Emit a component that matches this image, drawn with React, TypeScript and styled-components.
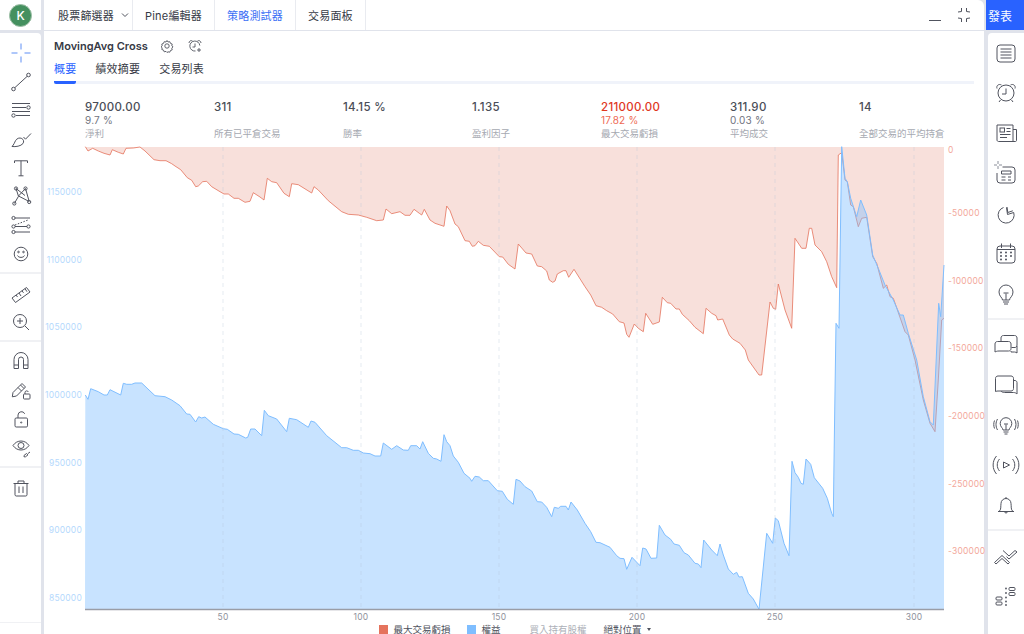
import { ReactNode } from 'react';
import styled, { createGlobalStyle } from 'styled-components';

const GlobalStyle = createGlobalStyle`
  html, body {
    margin: 0;
    height: 100%;
    overflow: hidden;
    background: #e0e3eb;
    font-family: Inter, "Noto Sans CJK TC", "Liberation Sans", sans-serif;
    color: #363a45;
  }
`;

const GlyphSvg = styled.svg`
  display: block;
  fill: none;
  stroke: #50535e;
  stroke-width: 1;
`;

const CrossGlyph = styled(GlyphSvg)`
  stroke: #5f8ff5;
`;

// curves were read off enlarged crops, so each run keeps its crop origin and scale
const crop = (ox: number, oy: number, s: number, raw: number[]) => {
  const pts: [number, number][] = [];
  for (let i = 0; i < raw.length; i += 2) pts.push([ox + raw[i] / s, oy + raw[i + 1] / s]);
  return pts;
};

const drawdown = [
  ...crop(80, 145, 3, [16,5,24,18,38,10,55,18,72,25,90,30,97,14,115,22,130,27,138,10,160,9,180,6,195,18,222,44,240,47,258,47,275,56,285,63,302,74,322,98,335,106,347,125,355,123,368,110,380,109,395,125,420,140,432,147,445,147,462,160,475,160,495,172,510,169,520,143,540,156,552,165,562,100,575,110,590,113,612,145,628,155,635,116,655,119,695,144,702,125,715,135,745,167,785,200,805,208,835,210,860,217,890,227,910,225,918,192,935,206,960,200,975,211,990,211,1002,193,1018,205]),
  ...crop(420, 200, 3, [5,45,13,28,30,60,45,70,72,79,80,18,90,32,105,72,115,80,135,122,148,124,157,139,165,137,175,124,190,136,208,139,238,170,248,171,265,193,285,207,295,132,318,159,335,162,352,198,365,200,380,213,388,240,398,247,405,243,412,222,430,212,438,212,446,232,462,208,495,260,512,285,528,317,545,322,560,332,578,342,598,365,612,369,620,403,627,412,643,372,655,385,670,395,677,340,698,373,718,366,727,292,742,308,752,310,768,327,778,327,787,343,808,362,825,382,850,401,858,325,875,340,888,347,893,360,908,357,928,405,938,417,960,430,976,450,985,480,1017,525,1025,525,1050,306,1060,325,1067,328]),
  ...crop(720, 140, 3, [175,432,195,510,215,565,225,295,245,325,258,325,268,265,275,265,285,315,305,335,320,365,335,410,350,443,355,45,365,38,375,120,382,125,392,195,400,200,415,260,425,235,440,232,458,350,470,370,490,445,500,435,510,470,520,475,555,575,565,585,585,660,610,780,630,850,645,875,655,720,665,540,672,535]),
];

const equity = [
  ...crop(80, 375, 3, [16,60,24,73,32,41,55,50,72,60,82,60,90,44,122,60,130,25,140,28,155,28,165,24,185,24,225,62,255,65,275,75,300,92,320,117,330,118,347,141,356,125,365,129,375,126,400,148,430,161,442,163,462,177,475,178,497,189,503,187,512,162,525,162,545,182,553,106,565,122,590,132,620,170,628,130,650,134,685,157,693,138,705,142,740,182,785,218,800,218,820,226,835,226,850,234,870,236,885,243,902,243,910,204,935,223,950,212,970,225,985,226,992,212,1010,212,1020,222]),
  ...crop(420, 430, 3, [8,35,25,70,40,85,50,87,63,94,72,14,80,35,90,47,100,78,115,97,132,130,150,145,155,154,165,139,178,141,190,152,205,152,232,182,247,184,262,208,280,223,288,148,300,153,315,170,335,183,352,215,365,216,380,232,395,260,403,232,415,235,422,229,438,229,445,240,453,216,472,240,495,280,512,305,528,337,540,338,570,352,590,377,600,385,612,386,620,418,636,382,660,407,668,354,678,357,693,385,710,384,718,286,735,315,752,328,762,342,778,346,792,368,805,375,825,400,835,402,843,413,851,330,875,360,892,377,900,342,910,375,925,417,940,433,950,427,957,441,967,440,985,490,1000,507,1017,538,1040,310,1058,340,1066,264,1075,272,1092,340,1107,377,1116,94,1125,128,1135,142,1143,160,1150,163,1158,87,1172,103,1183,143,1208,175,1222,205,1235,250,1240,260]),
  ...crop(720, 140, 3, [343,900,348,550,357,565,365,20,375,115,382,125,392,175,410,230,422,180,440,225,458,345,475,385,495,435,520,480,540,525,550,525,565,580,590,660,610,770,630,845,640,855,656,490,662,530,672,375]),
];

const line = (pts: [number, number][]) => pts.map(([x, y]) => `${x.toFixed(1)},${y.toFixed(1)}`).join(' ');

const PLOT = { left: 85, right: 944, top: 147, bottom: 609 };

const drawdownArea = `${PLOT.left},${PLOT.top} ${line(drawdown)} ${PLOT.right},${PLOT.top}`;
const equityArea = `${PLOT.left},${PLOT.bottom} ${line(equity)} ${PLOT.right},${PLOT.bottom}`;

const ticks = [
  { x: 223, label: '50' },
  { x: 361, label: '100' },
  { x: 499, label: '150' },
  { x: 637, label: '200' },
  { x: 775, label: '250' },
  { x: 914, label: '300' },
];
const leftAxis = [
  { y: 192, label: '1150000' },
  { y: 260, label: '1100000' },
  { y: 327, label: '1050000' },
  { y: 395, label: '1000000' },
  { y: 463, label: '950000' },
  { y: 530, label: '900000' },
  { y: 598, label: '850000' },
];
const rightAxis = [
  { y: 150, label: '0' },
  { y: 213, label: '-50000' },
  { y: 281, label: '-100000' },
  { y: 348, label: '-150000' },
  { y: 416, label: '-200000' },
  { y: 484, label: '-250000' },
  { y: 551, label: '-300000' },
];

const stats = [
  { value: '97000.00', sub: '9.7 %', label: '淨利' },
  { value: '311', label: '所有已平倉交易' },
  { value: '14.15 %', label: '勝率' },
  { value: '1.135', label: '盈利因子' },
  { value: '211000.00', sub: '17.82 %', label: '最大交易虧損', loss: true },
  { value: '311.90', sub: '0.03 %', label: '平均成交' },
  { value: '14', label: '全部交易的平均持倉' },
];

const Glyph = ({ children }: { children: ReactNode }) => (
  <GlyphSvg width={28} height={28} viewBox="0 0 28 28">
    {children}
  </GlyphSvg>
);

const leftGroups: ReactNode[][] = [
  [
    <CrossGlyph key="cross" viewBox="0 0 28 28" width={28} height={28}>
      <path d="M4.5 14h6M17.5 14h6M14 4.5v6M14 17.5v6" />
    </CrossGlyph>,
    <Glyph key="line">
      <path d="M7.8 19.7 20.2 8.300" />
      <circle cx="6.5" cy="21" r="1.8" />
      <circle cx="21.5" cy="7" r="1.8" />
    </Glyph>,
    <Glyph key="channel">
      <path d="M5 7.5h18M5 11.5h14M5 15.5h18M9 19.5h14" />
      <circle cx="21.5" cy="11.5" r="1.7" />
      <circle cx="6.5" cy="19.5" r="1.7" />
    </Glyph>,
    <Glyph key="brush">
      <path d="M5 21.5c3.500.5 9-.3 11-3 1.200-1.800.6-4-1.200-5-2.200-1.200-5-.2-6.300 2.200-1 1.800-1.500 3.800-3.500 5.800Z" />
      <path d="m16.5 12 2 2.200 5.500-5.700" />
    </Glyph>,
    <Glyph key="text">
      <path d="M7.5 9V6.800h13V9M14 6.800v15M11.5 21.800h5" />
    </Glyph>,
    <Glyph key="pattern">
      <path d="m9 6.500 2.500 7.800-4.200 7.200M9 6.500l9 7M18.5 6.500l-7 7.500M18.5 6.500l3.700 13M11.5 14l10.700 5.500" />
      <circle cx="9" cy="6.5" r="1.6" />
      <circle cx="18.5" cy="6.5" r="1.6" />
      <circle cx="7.3" cy="21.5" r="1.6" />
      <circle cx="22.2" cy="20" r="1.6" />
    </Glyph>,
    <Glyph key="forecast">
      <path d="M8 7h15M8 15.5h12M8 21h15" />
      <path strokeDasharray="1.5 1.5" d="m8 14 13-5" />
      <circle cx="6.5" cy="7" r="1.6" />
      <circle cx="6.5" cy="15.5" r="1.6" />
      <circle cx="6.5" cy="21" r="1.6" />
      <circle cx="21.5" cy="15.5" r="1.6" />
    </Glyph>,
    <Glyph key="smile">
      <circle cx="14" cy="14" r="6.8" />
      <path d="M10.5 15.5c1 2.500 6 2.500 7 0" />
      <circle cx="11.5" cy="12" r=".8" />
      <circle cx="16.5" cy="12" r=".8" />
    </Glyph>,
  ],
  [
    <Glyph key="ruler">
      <path d="m5 19 14.500-10.500 3.500 4.500L8.500 23.500Z" />
      <path d="m9 16 1.500 2M12 14l2 3M15 11.800l1.500 2M18 9.700l2 3" />
    </Glyph>,
    <Glyph key="zoom">
      <circle cx="13" cy="13" r="6.5" />
      <path d="m18 18 4 4M13 10v6M10 13h6" />
    </Glyph>,
  ],
  [
    <Glyph key="magnet">
      <path d="M7 21.500v-9a7 7 0 0 1 14 0v9h-4.500v-9a2.500 2.500 0 0 0-5 0v9ZM7 18h4.500M16.500 18H21" />
    </Glyph>,
    <Glyph key="pencil-lock">
      <path d="m6 16.500 9-9 3.500 3.500-9 9-4.200.8ZM13.500 9l3.500 3.500M11 11.500l3.500 3.500" />
      <rect x="16.5" y="18" width="6.5" height="5" rx=".8" />
      <path d="M18 18v-1.500a1.700 1.700 0 0 1 3.300-.5" />
    </Glyph>,
    <Glyph key="lock">
      <rect x="8" y="13" width="12.5" height="9" rx="1.2" />
      <path d="M11 13v-3a3.500 3.500 0 0 1 6.700-1.200" />
      <circle cx="14.2" cy="17.5" r=".6" />
    </Glyph>,
    <Glyph key="eye">
      <path d="M6 11.500c4-6 12-6 16 0-4 6-12 6-16 0Z" />
      <circle cx="14" cy="11.5" r="3" />
      <path d="m17 21.500 2.500-2 1.500 1.300-2.500 2h-1.500ZM21 19.500l2-1.500" />
    </Glyph>,
  ],
  [
    <Glyph key="trash">
      <path d="M8 9.500v11.300c0 .7.500 1.200 1.200 1.200h9.600c.7 0 1.200-.5 1.200-1.200V9.500M6.500 9.500h15M11 9.500V7h6v2.500M12 12.500v6.500M16 12.500v6.500" />
    </Glyph>,
  ],
];

const rightGroups: ReactNode[][] = [
  [
    <Glyph key="list">
      <rect x="5" y="5" width="18" height="17" rx="3" />
      <path d="M8.5 9h11M8.5 12h11M8.5 15h11M8.5 18h11" />
    </Glyph>,
    <Glyph key="alarm">
      <circle cx="14" cy="13" r="8" />
      <path d="M14 8.500V14h-4M5 8.500c-1-3 2-5 4.500-3.500M23 8.500c1-3-2-5-4.500-3.500M8.500 20 7 22M19.500 20l1.500 2" />
    </Glyph>,
    <Glyph key="news">
      <path d="M21 21.500H6.500c-.8 0-1.500-.7-1.500-1.500V5h16v16.500h2.500c.5 0 1-.5 1-1V9.500H21" />
      <rect x="8" y="8" width="4.5" height="4" />
      <path d="M14.5 8.500h4M14.500 11.500h4M8 14.500h10.500M8 17.500h7" />
    </Glyph>,
    <Glyph key="screen">
      <path d="M2 5h3M7 5h3M6 1v3M6 6v3" stroke="#8a8e99" />
      <path d="M10.5 7H20a3 3 0 0 1 3 3v10a3 3 0 0 1-3 3H8a3 3 0 0 1-3-3v-7" />
      <path d="M9.5 11h9.500v3H9.500ZM9.500 17h4M9.500 20h4M16 17h3M16 20h3" />
    </Glyph>,
    <Glyph key="pie">
      <path d="M11.5 7.500a8 8 0 1 0 10.200 5l-6.200 2-1-7" />
      <path d="m15 7 .8 5.500 5-1.700" />
    </Glyph>,
    <Glyph key="calendar">
      <rect x="5" y="6" width="18" height="17" rx="3" />
      <path d="M9.5 3.500V8M18.500 3.500V8M5 9.500h18" />
      <path strokeWidth="2" strokeLinecap="round" d="M9 12.500h0M14 12.500h0M19 12.500h0M9 16h0M14 16h0M19 16h0M9 19.500h0M14 19.500h0" />
    </Glyph>,
    <Glyph key="bulb">
      <path d="M10.5 20c0-2.500-3.500-3.500-3.500-8a7 7 0 0 1 14 0c0 4.500-3.500 5.500-3.500 8ZM11 22h6M12 24h4" />
      <path d="M14 20v-6.500M11.500 13h5" />
    </Glyph>,
  ],
  [
    <Glyph key="chats">
      <path d="M3 21V13c0-1.500 1-2.500 2.500-2.500h11c1.500 0 2.500 1 2.500 2.500v4.500c0 1.500-1 2.500-2.500 2.500H7c-2 0-3 .5-4 1Z" />
      <path d="M9 10.500V7c0-1.500 1-2.500 2.500-2.500h11C24 4.500 25 5.500 25 7v7c0 1.500-1 2.500-2 2.500h-3.500" />
      <path d="M19 20v1h3.500c1 0 2 .5 2.500 1v-7" />
    </Glyph>,
    <Glyph key="chat">
      <path d="M3.5 20.500V7.500C3.500 6 4.500 5 6 5h13c1.500 0 2.500 1 2.500 2.500v10c0 1.500-1 2.500-2.500 2.500H7c-1.500 0-2.800 0-3.500.5Z" />
      <path d="M21.5 9.500h1.500c1 0 2 1 2 2v11.500c-1-1-2-1.500-3.500-1.500H12.500c-1.500 0-3-.5-3.500-1.500" />
    </Glyph>,
    <Glyph key="bulb-waves">
      <path d="M11 19c0-2-2.800-3-2.800-6.500a5.800 5.800 0 0 1 11.600 0C19.800 16 17 17 17 19ZM11.500 21h5M12.500 23h3M14 19v-5.500M12 13h4" />
      <path d="M5.5 8c-2 3.500-2 7.500 0 11M2.500 9.500c-1 2.500-1 5.500 0 8M22.500 8c2 3.500 2 7.500 0 11M25.500 9.500c1 2.500 1 5.500 0 8" />
    </Glyph>,
    <Glyph key="play-waves">
      <path d="m11.5 11 6 3-6 3Z" />
      <path d="M7.5 8c-3 3.500-3 8.500 0 12M20.500 8c3 3.500 3 8.500 0 12M4.500 5c-4.500 5-4.500 13 0 18M23.500 5c4.500 5 4.500 13 0 18" />
    </Glyph>,
    <Glyph key="bell">
      <path d="M6 20.500h16M7 20.500c2.500-2 1.500-5 2-8a5 5 0 0 1 10 0c.5 3-.5 6 2 8M12.500 20.500c0 2 3 2 3 0M14 7.500V6" />
    </Glyph>,
  ],
  [
    <Glyph key="chevrons">
      <path d="m2.500 20.500 7.500-7 7.500 7-1.500 1.500-6-5.500-6 5.500ZM11 8.500l6 5.500 6-5.500 2 1.500-8 7-2.500-2.300" />
    </Glyph>,
    <Glyph key="pills">
      <rect x="17" y="5.5" width="6" height="3" rx="1" />
      <rect x="17" y="10.5" width="6" height="3" rx="1" />
      <rect x="4" y="15" width="6" height="3" rx="1" />
      <rect x="4" y="20" width="6" height="3" rx="1" />
      <path strokeWidth="1.8" strokeLinecap="round" d="M14 6.500h0M14 11h0M14 15.500h0M14 19.500h0M14 23h0" />
    </Glyph>,
  ],
];

const App = () => {
  return (
    <Shell>
      <GlobalStyle />

      <LeftColumn>
        <AvatarCell>
          <Avatar>K</Avatar>
        </AvatarCell>
        <LeftBar>
          {leftGroups.map((group, i) => (
            <LeftGroup key={i}>
              {group.map((icon, j) => (
                <LeftSlot key={j}>{icon}</LeftSlot>
              ))}
            </LeftGroup>
          ))}
          <LeftFooter />
        </LeftBar>
      </LeftColumn>

      <Center>
        <TopBar>
          <TopTab>
            股票篩選器
            <svg width="8" height="6" viewBox="0 0 8 6" fill="none" stroke="#50535e">
              <path d="m1 1.500 3 3 3-3" />
            </svg>
          </TopTab>
          <TopTab>Pine編輯器</TopTab>
          <TopTab $active>策略測試器</TopTab>
          <TopTab>交易面板</TopTab>
          <WindowButtons>
            <svg width="14" height="14" viewBox="0 0 14 14" stroke="#50535e" fill="none">
              <path d="M1 12.500h12" />
            </svg>
            <svg width="16" height="16" viewBox="0 0 16 16" stroke="#50535e" fill="none">
              <path d="M5.5 1v3.500L2 5M10.500 1v3.500L14 5M5.500 15v-3.500L2 11M10.500 15v-3.500L14 11" />
            </svg>
          </WindowButtons>
        </TopBar>

        <Panel>
          <TitleRow>
            <Title>MovingAvg Cross</Title>
            <TitleIcon viewBox="0 0 14 14" width={14} height={14}>
              <circle cx="7" cy="7" r="2.2" />
              <path d="M7 1.500 8 3l1.800-.3.700 1.700L12.200 5l-.4 1.800L13 7.800l-1.200 1.400.4 1.700-1.700.6-.7 1.700-1.800-.4L7 13.500l-1-1.100-1.800.4-.7-1.700-1.700-.6.400-1.700L1 7.800l1.200-1L1.800 5l1.700-.6.700-1.700L6 3Z" />
            </TitleIcon>
            <TitleIcon viewBox="0 0 14 14" width={14} height={14}>
              <path d="M11.800 6.500A5 5 0 1 0 7.500 12M7 4.500V8H4.500M1 4c0-2 2-3 3.500-2M13 4c0-2-2-3-3.500-2M11 9v4M9 11h4" />
            </TitleIcon>
          </TitleRow>

          <TabRow>
            <Tab $active>概要</Tab>
            <Tab>績效摘要</Tab>
            <Tab>交易列表</Tab>
          </TabRow>

          <StatsRow>
            {stats.map((stat) => (
              <Stat key={stat.label}>
                <StatValue $loss={stat.loss}>{stat.value}</StatValue>
                <StatSub $loss={stat.loss}>{stat.sub}</StatSub>
                <StatLabel>{stat.label}</StatLabel>
              </Stat>
            ))}
          </StatsRow>

          <Chart viewBox="44 147 940 475" width={940} height={475}>
            <polygon points={drawdownArea} fill="#f6d5cf" fillOpacity={0.75} />
            <polyline points={line(drawdown)} fill="none" stroke="#e5735d" strokeOpacity={0.8} />
            <polygon points={equityArea} fill="#7fbeff" fillOpacity={0.43} />
            <polyline points={line(equity)} fill="none" stroke="#7fbeff" />
            {ticks.map((t) => (
              <line key={t.x} x1={t.x} x2={t.x} y1={PLOT.top} y2={PLOT.bottom} stroke="#b4c4d8" strokeOpacity={0.35} strokeDasharray="4 4" />
            ))}
            <line x1={PLOT.left} x2={PLOT.right} y1={PLOT.bottom + 0.5} y2={PLOT.bottom + 0.5} stroke="#9a9da6" strokeWidth={1.5} />

            {leftAxis.map((a) => (
              <AxisText key={a.label} x={82} y={a.y + 3} textAnchor="end" fill="#b5d9fd">
                {a.label}
              </AxisText>
            ))}
            {rightAxis.map((a) => (
              <AxisText key={a.label} x={948} y={a.y + 3} fill="#f3a89b">
                {a.label}
              </AxisText>
            ))}
            {ticks.map((t) => (
              <AxisText key={t.x} x={t.x} y={620} textAnchor="middle" fill="#8f929c">
                {t.label}
              </AxisText>
            ))}
          </Chart>

          <Legend>
            <LegendItem>
              <Swatch $color="#e5735d" />
              最大交易虧損
            </LegendItem>
            <LegendItem>
              <Swatch $color="#7fbeff" />
              權益
            </LegendItem>
            <LegendItem $muted>買入持有股權</LegendItem>
            <LegendItem>
              絕對位置
              <Caret />
            </LegendItem>
          </Legend>
        </Panel>
      </Center>

      <RightColumn>
        <PublishButton>發表</PublishButton>
        <RightBar>
          {rightGroups.map((group, i) => (
            <RightGroup key={i}>
              {group.map((icon, j) => (
                <RightSlot key={j}>{icon}</RightSlot>
              ))}
            </RightGroup>
          ))}
        </RightBar>
      </RightColumn>
    </Shell>
  );
};

export default App;

const Shell = styled.div`
  display: flex;
  width: 1024px;
  height: 634px;
  overflow: hidden;
  background: #e0e3eb;
`;

const LeftColumn = styled.div`
  display: flex;
  flex-direction: column;
  flex: none;
  width: 41px;
  gap: 3px;
`;

const AvatarCell = styled.div`
  display: flex;
  align-items: center;
  justify-content: center;
  height: 30px;
  background: #fff;
`;

const Avatar = styled.div`
  box-sizing: border-box;
  display: flex;
  align-items: center;
  justify-content: center;
  width: 23px;
  height: 23px;
  border-radius: 50%;
  border: 1.5px solid #9dbfa6;
  background: #44905f;
  color: #fff;
  font-size: 12px;
  font-weight: 500;
`;

const LeftBar = styled.div`
  display: flex;
  flex-direction: column;
  flex: 1;
  background: #fff;
  border-top-right-radius: 4px;
`;

const LeftGroup = styled.div`
  display: flex;
  flex-direction: column;
  padding: 4px 0;
  border-bottom: 2px solid #f0f1f4;

  &:first-child {
    padding-top: 5.5px;
    height: 241px;
    box-sizing: border-box;
  }

  &:nth-child(4) {
    flex: 1;
    padding-top: 5px;
    border-bottom: 0;
  }
`;

const LeftSlot = styled.div`
  display: flex;
  align-items: center;
  justify-content: center;
  height: 29px;
`;

const LeftFooter = styled.div`
  height: 11px;
  border-top: 1px solid #f0f1f4;
`;

const Center = styled.div`
  display: flex;
  flex-direction: column;
  flex: none;
  width: 940px;
  margin-left: 3px;
  gap: 1px;
`;

const TopBar = styled.div`
  display: flex;
  flex: none;
  height: 30px;
  background: #fff;
  border-top-right-radius: 6px;
`;

const TopTab = styled.div<{ $active?: boolean }>`
  display: flex;
  align-items: center;
  gap: 7px;
  padding: 0 12px;
  font-size: 11px;
  letter-spacing: 0.2px;
  color: ${(props) => (props.$active ? '#3a6ff5' : '#363a45')};
  border-left: 1px solid #e9ebf0;

  &:first-child {
    padding: 0 3px 0 13px;
    border-left: 0;
    margin-left: 1px;
  }

  &:nth-child(4) {
    border-right: 1px solid #e9ebf0;
  }
`;

const WindowButtons = styled.div`
  display: flex;
  align-items: center;
  gap: 14px;
  margin-left: auto;
  padding-right: 12px;
`;

const Panel = styled.div`
  display: flex;
  flex-direction: column;
  flex: 1;
  background: #fff;
  min-height: 0;
`;

const TitleRow = styled.div`
  display: flex;
  align-items: center;
  flex: none;
  height: 18px;
  margin: 6px 0 2px 10px;
`;

const Title = styled.div`
  width: 106px;
  font-size: 11px;
  font-weight: 600;
  color: #363a45;
`;

const TitleIcon = styled.svg`
  flex: none;
  margin-right: 14px;
  fill: none;
  stroke: #50535e;
  stroke-width: 0.9;
`;

const TabRow = styled.div`
  display: flex;
  flex: none;
  gap: 19px;
  height: 27px;
  box-sizing: border-box;
  margin: 0 10px;
  border-bottom: 3px solid #f0f3fa;
`;

const Tab = styled.div<{ $active?: boolean }>`
  box-sizing: border-box;
  height: 27px;
  padding-top: 3px;
  font-size: 11px;
  letter-spacing: 0.2px;
  color: ${(props) => (props.$active ? '#2962ff' : '#363a45')};
  border-bottom: 3px solid ${(props) => (props.$active ? '#2962ff' : 'transparent')};
  border-radius: 0 0 2px 2px;
`;

const StatsRow = styled.div`
  display: grid;
  grid-template-columns: repeat(7, 129px);
  flex: none;
  box-sizing: border-box;
  height: 63px;
  padding: 16.5px 0 0 41px;
`;

const Stat = styled.div`
  display: flex;
  flex-direction: column;
`;

const StatValue = styled.div<{ $loss?: boolean }>`
  height: 13px;
  font-size: 11.5px;
  line-height: 13px;
  font-weight: 500;
  letter-spacing: 0.3px;
  white-space: nowrap;
  color: ${(props) => (props.$loss ? '#e0381f' : '#4a4d57')};
`;

const StatSub = styled.div<{ $loss?: boolean }>`
  height: 13px;
  font-size: 10px;
  line-height: 13px;
  letter-spacing: 0.2px;
  color: ${(props) => (props.$loss ? '#ee6a55' : '#70737e')};
`;

const StatLabel = styled.div`
  height: 13px;
  font-size: 9.5px;
  line-height: 13px;
  white-space: nowrap;
  color: #a6a9b1;
`;

const Chart = styled.svg`
  display: block;
  flex: none;
  overflow: visible;
`;

const AxisText = styled.text`
  font-family: Inter, "Liberation Sans", sans-serif;
  font-size: 8.5px;
  letter-spacing: 0.2px;
`;

const Legend = styled.div`
  display: flex;
  align-items: center;
  justify-content: center;
  flex: none;
  height: 13px;
  gap: 17px;
  padding: 1px 0 0 2px;
`;

const LegendItem = styled.div<{ $muted?: boolean }>`
  display: flex;
  align-items: center;
  gap: 5px;
  font-size: 9.5px;
  line-height: 12px;
  white-space: nowrap;
  color: ${(props) => (props.$muted ? '#adb0b8' : '#50535e')};
  margin-left: ${(props) => (props.$muted ? '12px' : '0')};
`;

const Swatch = styled.span<{ $color: string }>`
  display: block;
  width: 9px;
  height: 10px;
  background: ${(props) => props.$color};
`;

const Caret = styled.span`
  width: 0;
  height: 0;
  border-left: 2.5px solid transparent;
  border-right: 2.5px solid transparent;
  border-top: 3px solid #50535e;
`;

const RightColumn = styled.div`
  display: flex;
  flex-direction: column;
  flex: none;
  width: 40px;
  gap: 3px;
`;

const PublishButton = styled.div`
  display: flex;
  align-items: center;
  flex: none;
  height: 30px;
  margin-left: 2px;
  padding-left: 2px;
  background: #2962ff;
  color: #fff;
  font-size: 12px;
`;

const RightBar = styled.div`
  display: flex;
  flex-direction: column;
  flex: 1;
  margin-left: 4px;
  background: #fff;
  border-top-left-radius: 4px;
`;

const RightGroup = styled.div`
  display: flex;
  flex-direction: column;
  padding: 1px 0 4px;
  border-bottom: 2px solid #f0f1f4;

  & + & {
    padding-top: 5px;
  }

  &:last-child {
    border-bottom: 0;
  }
`;

const RightSlot = styled.div`
  display: flex;
  align-items: center;
  justify-content: center;
  height: 40px;
`;
